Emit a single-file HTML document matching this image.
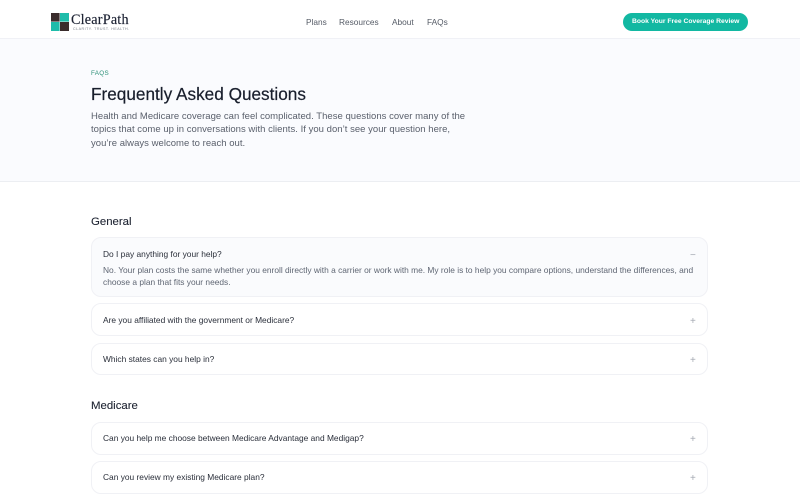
<!DOCTYPE html>
<html lang="en"><head><meta charset="utf-8"><title>ClearPath FAQs</title>
<style>
html,body{margin:0;padding:0;width:800px;height:500px;overflow:hidden;background:#fff}
body{font-family:"Liberation Sans",sans-serif;position:relative;color:#1a2030}
.t{position:absolute;white-space:nowrap;line-height:1;filter:blur(.2px)}
.hero{position:absolute;left:0;top:38px;width:800px;height:144px;background:#fafbfe;border-top:1px solid #f0f1f6;border-bottom:1px solid #eceef2;box-sizing:border-box}
.card{position:absolute;left:91px;width:617px;box-sizing:border-box;border:1px solid #f0f1f5;border-radius:10px;background:#fff}
.q{font-size:8.4px;color:#2a2f3a}
.a{font-size:8.4px;color:#5f6673}
.p{font-size:9.5px;letter-spacing:.03px;color:#5a606c}
.h2{font-size:11.4px;color:#1c2230;-webkit-text-stroke:.1px #1c2230}
.ic{position:absolute;left:690px;font-size:10px;color:#a4a9b2;line-height:1}
.nav{font-size:8.3px;color:#555b66}
</style></head><body>
<svg style="position:absolute;left:51px;top:13px" width="18" height="18" viewBox="0 0 18 18"><rect x="0" y="0" width="8.6" height="8.6" fill="#3a2c2c"/><rect x="9" y="0" width="9" height="8.6" fill="#1fbcaa"/><rect x="0" y="9" width="8.6" height="9" fill="#1fbcaa"/><rect x="9" y="9" width="9" height="9" fill="#3a2c2c"/></svg>
<div class="t" style="left:71px;top:12.5px;font-family:'Liberation Serif',serif;font-size:14.2px;color:#1c2233;letter-spacing:.2px;-webkit-text-stroke:.15px #1c2233">ClearPath</div>
<div class="t" style="left:73px;top:27.5px;font-size:3.6px;letter-spacing:.5px;color:#7a808a">CLARITY. TRUST. HEALTH.</div>
<div class="t nav" style="left:306px;top:18px">Plans</div>
<div class="t nav" style="left:339px;top:18px">Resources</div>
<div class="t nav" style="left:392px;top:18px">About</div>
<div class="t nav" style="left:427px;top:18px">FAQs</div>
<div style="position:absolute;left:623px;top:13px;width:125px;height:18px;border-radius:9px;background:#12b8a2"></div>
<div class="t" style="left:632px;top:19px;font-size:6.75px;font-weight:700;color:#fff">Book Your Free Coverage Review</div>
<div class="hero"></div>
<div class="t" style="left:91px;top:71px;font-size:6.3px;letter-spacing:.3px;color:#2a8f76">FAQS</div>
<div class="t" style="left:91px;top:85.5px;font-size:17.2px;color:#181e2c;-webkit-text-stroke:.2px #181e2c">Frequently Asked Questions</div>
<div class="t p" style="left:91px;top:111.5px">Health and Medicare coverage can feel complicated. These questions cover many of the</div>
<div class="t p" style="left:91px;top:125px">topics that come up in conversations with clients. If you don’t see your question here,</div>
<div class="t p" style="left:91px;top:138.5px">you’re always welcome to reach out.</div>
<div class="t h2" style="left:91px;top:216.5px">General</div>
<div class="card" style="top:237px;height:60px;background:#fafbfd"></div>
<div class="t q" style="left:103px;top:249.5px">Do I pay anything for your help?</div>
<div class="ic" style="top:250.5px">−</div>
<div class="t a" style="left:103px;top:266px">No. Your plan costs the same whether you enroll directly with a carrier or work with me. My role is to help you compare options, understand the differences, and</div>
<div class="t a" style="left:103px;top:277.5px">choose a plan that fits your needs.</div>
<div class="card" style="top:303px;height:33px"></div>
<div class="t q" style="left:103px;top:315.5px">Are you affiliated with the government or Medicare?</div>
<div class="ic" style="top:317px">+</div>
<div class="card" style="top:343px;height:32px"></div>
<div class="t q" style="left:103px;top:354.5px">Which states can you help in?</div>
<div class="ic" style="top:356px">+</div>
<div class="t h2" style="left:91px;top:400.5px">Medicare</div>
<div class="card" style="top:422px;height:33px"></div>
<div class="t q" style="left:103px;top:433.5px">Can you help me choose between Medicare Advantage and Medigap?</div>
<div class="ic" style="top:435px">+</div>
<div class="card" style="top:461px;height:33px"></div>
<div class="t q" style="left:103px;top:472.5px">Can you review my existing Medicare plan?</div>
<div class="ic" style="top:474px">+</div>
</body></html>
